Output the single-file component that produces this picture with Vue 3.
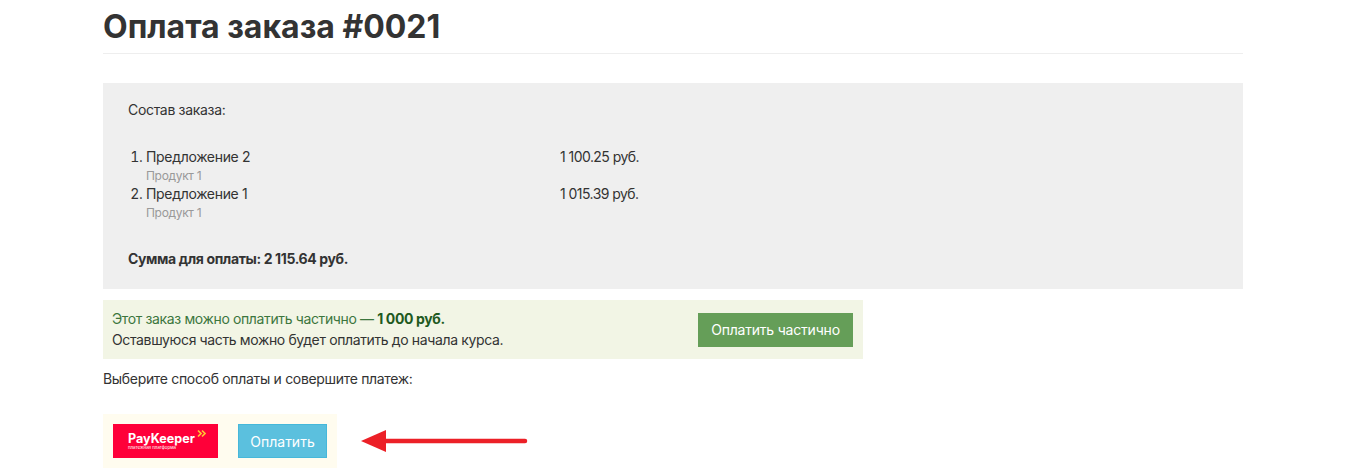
<script setup>
import { ref } from "vue";

const items = ref([
  { id: 1, name: "Предложение 2", product: "Продукт 1", price: "1 100.25 руб." },
  { id: 2, name: "Предложение 1", product: "Продукт 1", price: "1 015.39 руб." },
]);
</script>

<template>
  <div class="page">
    <h1 class="title">Оплата заказа #0021</h1>

    <div class="order">
      <p class="order-head">Состав заказа:</p>
      <ol class="order-list">
        <li v-for="item in items" :key="item.id" class="order-item">
          <div class="order-row">
            <span class="order-name">{{ item.name }}</span>
            <span class="order-price">{{ item.price }}</span>
          </div>
          <div class="order-product">{{ item.product }}</div>
        </li>
      </ol>
      <p class="order-total">Сумма для оплаты: 2 115.64 руб.</p>
    </div>

    <div class="partial">
      <div class="partial-text">
        <div class="partial-green">Этот заказ можно оплатить частично — <b>1 000 руб.</b></div>
        <div>Оставшуюся часть можно будет оплатить до начала курса.</div>
      </div>
      <button class="btn btn-green">Оплатить частично</button>
    </div>

    <p class="choose">Выберите способ оплаты и совершите платеж:</p>

    <div class="pay">
      <div class="pay-box">
        <div class="logo">
          <svg width="105" height="34" viewBox="0 0 105 34">
            <text x="15" y="19" class="logo-text">PayKeeper</text>
            <path d="M85 6.5l3 3-3 3M89 6.5l3 3-3 3" fill="none" stroke="#ffc533" stroke-width="1.7" />
            <text x="15" y="24.5" class="logo-sub">платежная платформа</text>
          </svg>
        </div>
        <button class="btn btn-blue">Оплатить</button>
      </div>
      <svg class="arrow" width="170" height="26" viewBox="0 0 170 26">
        <path d="M26 13H165" stroke="#ec2027" stroke-width="4.5" stroke-linecap="round" />
        <path d="M1 13L26 2V24Z" fill="#ec2027" />
      </svg>
    </div>
  </div>
</template>

<style>
html, body {
  margin: 0;
  background: #fff;
}
</style>

<style scoped>
.page {
  width: 1140px;
  margin: 0 auto;
  height: 468px;
  overflow: hidden;
  box-sizing: border-box;
  font-family: Inter, "Noto Sans", sans-serif;
  font-size: 14px;
  line-height: 22px;
  letter-spacing: -0.32px;
  color: #333;
}
.title {
  margin: 0 0 29px;
  height: 53px;
  border-bottom: 1px solid #eee;
  font-size: 32px;
  line-height: 53px;
  font-weight: 700;
  letter-spacing: 0;
  color: #333;
}
.order {
  background: #efefef;
  height: 206px;
  box-sizing: border-box;
  padding: 16px 25px 0;
}
.order-head {
  margin: 0 0 25px;
}
.order-list {
  margin: 0 0 28px;
  padding: 0 0 0 18px;
}
.order-row {
  display: flex;
}
.order-name {
  width: 414px;
}
.order-price {
  letter-spacing: -0.55px;
}
.order-product {
  font-size: 12px;
  line-height: 15px;
  color: #999;
}
.order-total {
  margin: 0;
  font-weight: 700;
  letter-spacing: -0.38px;
}
.partial {
  width: 760px;
  height: 59px;
  margin-top: 11px;
  box-sizing: border-box;
  padding: 0 10px 0 9px;
  display: flex;
  align-items: center;
  justify-content: space-between;
  background: #f2f5e5;
  line-height: 21px;
}
.partial-text {
  padding-bottom: 2px;
  letter-spacing: -0.37px;
}
.partial-green {
  color: #3c763d;
}
.partial-green b {
  color: #1e5a1f;
}
.btn {
  font-family: inherit;
  font-size: 14px;
  color: #fff;
  border: 1px solid transparent;
  padding: 0;
  height: 34px;
}
.btn-green {
  width: 155px;
  background: #659e58;
  letter-spacing: -0.2px;
}
.btn-blue {
  width: 90px;
  background: #5bc0de;
  border-color: #46b8da;
}
.choose {
  margin: 9px 0 24px;
}
.pay {
  position: relative;
}
.pay-box {
  width: 234px;
  height: 54px;
  box-sizing: border-box;
  padding: 10px;
  display: flex;
  gap: 20px;
  background: #fffcef;
}
.logo {
  width: 105px;
  height: 34px;
  background: #ff0039;
}
.logo-text {
  font-family: Inter, sans-serif;
  font-size: 12.6px;
  font-weight: 700;
  letter-spacing: 0;
  fill: #fff;
}
.logo-sub {
  font-family: Inter, sans-serif;
  font-size: 4.4px;
  letter-spacing: 0;
  fill: #fff;
}
.arrow {
  position: absolute;
  left: 257px;
  top: 14px;
}
</style>
